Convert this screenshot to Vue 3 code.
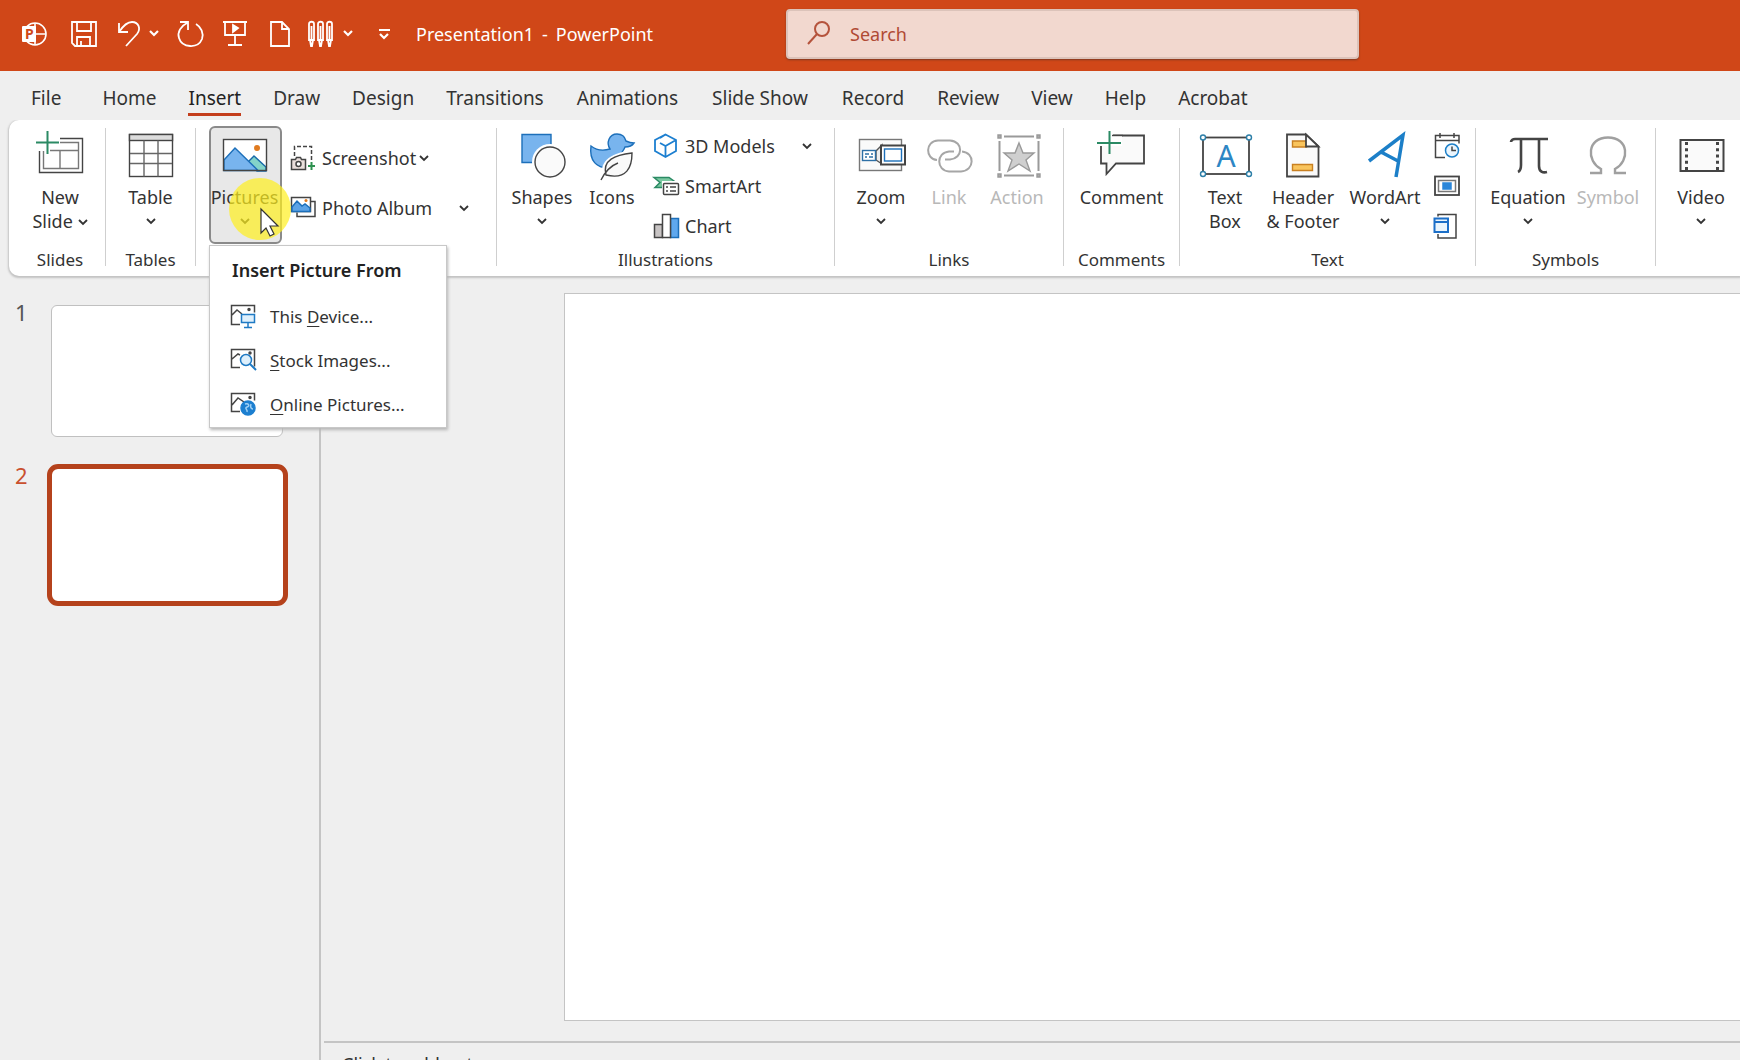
<script setup>
import { ref } from 'vue'

const tabs = [
  'File', 'Home', 'Insert', 'Draw', 'Design', 'Transitions', 'Animations',
  'Slide Show', 'Record', 'Review', 'View', 'Help', 'Acrobat'
]
const activeTab = ref('Insert')
const slides = [1, 2]
const activeSlide = ref(2)
const query = ref('')
</script>

<template>
  <div class="app">
    <header class="titlebar">
      <div class="quick">
        <svg class="logo" width="26" height="26" viewBox="0 0 26 26" fill="none" stroke="#fff" stroke-width="1.6">
          <circle cx="14" cy="13" r="11" />
          <path d="M14 2v22M14 13h11" />
          <rect x="1" y="5" width="14" height="16" rx="1" fill="#fff" stroke="none" />
          <text x="4" y="18" class="logo-letter">P</text>
        </svg>
        <button class="qbtn" aria-label="Save">
          <svg width="26" height="26" viewBox="0 0 26 26"><path d="M1 1h24v24H4l-3-3zM6 1v9h14V1M6 25v-9h13v9M10 25v-5" /></svg>
        </button>
        <button class="qbtn" aria-label="Undo">
          <svg width="26" height="26" viewBox="0 0 26 26"><path d="M4 2v9h9M4 11C8 5 12 1 17 1c7 0 9 7 5 12L11 25" /></svg>
          <svg width="14" height="14" viewBox="0 0 14 14"><path class="thick" d="M3 4l4 4 4-4" /></svg>
        </button>
        <button class="qbtn" aria-label="Redo">
          <svg width="26" height="26" viewBox="0 0 26 26"><path d="M1 1h8v8M8 2C2 5-2 11 0 17c3 10 19 11 23 1 2-6-1-12-6-15" /></svg>
        </button>
        <button class="qbtn" aria-label="From beginning">
          <svg width="26" height="26" viewBox="0 0 26 26"><path d="M0 1h24M2 1v13h20V1M12 14v10M5 24h14" /><path d="M10 4l5 3-5 4z" fill="#fff" /></svg>
        </button>
        <button class="qbtn" aria-label="New file">
          <svg width="26" height="26" viewBox="0 0 26 26"><path d="M4 1h11l7 7v17H4zM15 1v7h7" /></svg>
        </button>
        <button class="qbtn" aria-label="Pens">
          <svg width="26" height="26" viewBox="-1 0 26 26"><path d="M-3 19V3c0-3 5-3 5 0v16zM6 19V3c0-3 5-3 5 0v16zM15 19V3c0-3 5-3 5 0v16zM-2 19l1 6h1l1-6M7 19l1 6h1l1-6M16 19l1 6h1l1-6M-.500 5v14M8.500 5v14M17.500 5v14" /></svg>
          <svg width="14" height="14" viewBox="0 0 14 14"><path class="thick" d="M1 4l4 4 4-4" /></svg>
        </button>
        <button class="qbtn" aria-label="Customize toolbar">
          <svg width="14" height="14" viewBox="0 0 14 14"><path class="thick" d="M4 3h11M5 7l4 4 4-4" /></svg>
        </button>
        <h1 class="doc"><span>Presentation1</span><span>-</span><span>PowerPoint</span></h1>
      </div>
      <label class="search">
        <svg width="26" height="26" viewBox="0 0 26 26"><circle cx="16" cy="8" r="7" /><path d="M11 13L2 23" /></svg>
        <input v-model="query" type="text" placeholder="Search" aria-label="Search" />
      </label>
    </header>

    <nav class="tabs">
      <button
        v-for="tab in tabs" :key="tab" class="tab" :class="{ active: tab === activeTab }"
        @click="activeTab = tab"
      ><span>{{ tab }}</span></button>
    </nav>

    <section class="ribbon">
      <div class="group slides">
        <div class="tools">
          <button class="big">
            <svg class="ico" viewBox="0 0 48 48">
              <path d="M24 7.500H46.500V41.500H3.500V20" /><path d="M24 11.500H42.500V37.500H7.500V20M14 19.500H42M24 19.500V37" stroke="#777" />
              <path d="M11.500 0v23M0 11.500h23" stroke="#2b8a64" stroke-width="2" />
            </svg>
            <span class="cap">New<br />Slide <svg class="chev" viewBox="0 0 10 6"><path d="M1 1l4 4 4-4" /></svg></span>
          </button>
        </div>
        <div class="label">Slides</div>
      </div>

      <div class="group tables">
        <div class="tools">
          <button class="big">
            <svg class="ico" viewBox="0 0 48 48">
              <rect x="2.500" y="3.500" width="43" height="42" /><rect x="2.500" y="3.500" width="43" height="6" fill="#ddd" />
              <path d="M17 9.500v36M31 9.500v36M3 22.500h42M3 32.500h42" stroke="#666" />
            </svg>
            <span class="cap">Table</span>
            <svg class="chev" viewBox="0 0 10 6"><path d="M1 1l4 4 4-4" /></svg>
          </button>
        </div>
        <div class="label">Tables</div>
      </div>

      <div class="group images">
        <div class="tools">
          <div class="dropdown">
            <button class="big open" aria-haspopup="menu" aria-expanded="true">
              <svg class="ico" viewBox="0 0 48 48">
                <rect x="2.500" y="8.500" width="43" height="31" fill="#fff" stroke="none" />
                <path d="M27 31l6-6 12 11v4h-9z" fill="#83d3c9" stroke="#1769a8" />
                <path d="M3 29l11-12 23 22.500H3z" fill="#78b4ee" stroke="#1c6fba" />
                <circle cx="36" cy="17" r="3" fill="#e07a1f" stroke="none" />
                <rect x="2.500" y="8.500" width="43" height="31" />
              </svg>
              <span class="cap">Pictures</span>
              <svg class="chev" viewBox="0 0 10 6"><path d="M1 1l4 4 4-4" /></svg>
            </button>
            <div class="menu" role="menu">
              <h2>Insert Picture From</h2>
              <button role="menuitem">
                <svg class="mini" viewBox="0 0 26 26">
                  <path d="M10 21.500H1.500V2.500h23v7M2 12l5-5 5 4" /><circle cx="19" cy="6.500" r="1" fill="#333" />
                  <path d="M11.500 11.500h13v8h-13zM18 20v4M14 24.500h8" stroke="#1f7ac4" fill="#dff0fc" />
                </svg>
                <span>This <u>D</u>evice...</span>
              </button>
              <button role="menuitem">
                <svg class="mini" viewBox="0 0 26 26">
                  <path d="M10 20.500H1.500V2.500h23v17M2 12l6-5 2 1" /><circle cx="20" cy="6" r="1" fill="#333" />
                  <circle cx="16" cy="13" r="5.500" stroke="#1f7ac4" fill="#dff0fc" /><path d="M20 17l6 6" stroke="#1f7ac4" stroke-width="2" />
                </svg>
                <span><u>S</u>tock Images...</span>
              </button>
              <button role="menuitem">
                <svg class="mini" viewBox="0 0 26 26">
                  <path d="M10 20.500H1.500V2.500h23v7M2 14l6-7 6 4" /><circle cx="20" cy="6.500" r="1" fill="#333" />
                  <circle cx="18" cy="17" r="7" fill="#1c7fd0" stroke="#1c7fd0" /><path d="M15 13c4-1 5 2 2 3s1 3 0 5M21 13c-1 3 0 5 2 5" stroke="#9fd0f5" />
                </svg>
                <span><u>O</u>nline Pictures...</span>
              </button>
            </div>
            <div class="halo"></div>
            <svg class="cursor" width="20" height="30" viewBox="0 0 20 30">
              <path d="M1 1v24l5-5 4 8 4-2-4-8h8z" fill="#fff" stroke="#333" stroke-width="1.200" />
            </svg>
          </div>
          <div class="stack two">
            <button class="row">
              <svg class="mini" viewBox="0 0 26 26">
                <path d="M4.500 11V1.500h17V16" stroke-dasharray="4 2" />
                <path d="M1.500 14.500h4l1-2h4l1 2h4v10h-14z" fill="#eadfdc" /><circle cx="8.500" cy="19" r="2.500" fill="#fff" />
                <path d="M21.500 17v8M18 21h7" stroke="#2e9150" stroke-width="2" />
              </svg>
              <span>Screenshot</span><svg class="chev near" viewBox="0 0 10 6"><path d="M1 1l4 4 4-4" /></svg>
            </button>
            <button class="row">
              <svg class="mini" viewBox="0 0 26 26">
                <path d="M21 6.500h4v15H7v-4" />
                <rect x="1.500" y="2.500" width="19" height="14" fill="#fff" />
                <path d="M2 12l5-6 5 5 3-2 5 4v3.500H2z" fill="#5ca3e6" stroke="#1c6fba" /><circle cx="16" cy="5.500" r="1.500" fill="#e07a1f" stroke="none" />
              </svg>
              <span>Photo Album</span><svg class="chev far" viewBox="0 0 10 6"><path d="M1 1l4 4 4-4" /></svg>
            </button>
          </div>
        </div>
      </div>

      <div class="group illustrations">
        <div class="tools">
          <button class="big">
            <svg class="ico" viewBox="0 0 48 48">
              <path d="M4 3.500h29v28H4z" fill="#78b4ee" stroke="#1c6fba" />
              <circle cx="32" cy="31" r="18" fill="#fff" stroke="none" /><circle cx="32" cy="31" r="15" fill="#fafafa" />
            </svg>
            <span class="cap">Shapes</span>
            <svg class="chev" viewBox="0 0 10 6"><path d="M1 1l4 4 4-4" /></svg>
          </button>
          <button class="big">
            <svg class="ico" viewBox="0 0 48 48">
              <path d="M3 15c5 4 12 5 19 3-4-6-1-15 7-15 5 0 8 3 9 7 2 1 5 2 8 2-2 3-5 4-9 4-1 3-3 5-4 7l-13 14C9 37 1 30 3 15z" fill="#78b4ee" stroke="#1c6fba" />
              <path d="M14 46c-2-13 4-24 32-27 0 18-6 30-26 28z" fill="#fff" stroke="none" />
              <path d="M18 44c-4-15 9-20 26-22 0 14-5 27-26 22zM13 49c4-8 9-14 17-17" fill="#fafafa" />
            </svg>
            <span class="cap">Icons</span>
          </button>
          <div class="stack">
            <button class="row">
              <svg class="mini" viewBox="0 0 26 26"><path d="M12.500 1.500L23 7v11l-10.500 6L2 18V7zM12.500 24V13L23 7M12.500 13L7 10M12.500 1.500L7 5" stroke="#1c7fd0" stroke-width="1.800" /></svg>
              <span>3D Models</span><svg class="chev far" viewBox="0 0 10 6"><path d="M1 1l4 4 4-4" /></svg>
            </button>
            <button class="row">
              <svg class="mini" viewBox="0 0 26 26">
                <path d="M1 4.500h15l7 5H11v5H2l5-5z" fill="#7cc9a2" stroke="#2b8a64" />
                <path d="M9 8h17v15H9z" fill="#fff" stroke="none" />
                <rect x="10.500" y="10.500" width="15" height="11" rx="1" fill="#fff" /><path d="M13 14h2M17 14h6M13 18h2M17 18h6" />
              </svg>
              <span>SmartArt</span>
            </button>
            <button class="row">
              <svg class="mini" viewBox="0 0 26 26">
                <path d="M1.500 11.500h8v13h-8z" fill="#c8c4c4" /><path d="M17.500 5.500h8v19h-8z" fill="#5fa8ee" stroke="#1c6fba" /><path d="M9.500 1.500h8v23h-8z" fill="#fff" />
              </svg>
              <span>Chart</span>
            </button>
          </div>
        </div>
        <div class="label">Illustrations</div>
      </div>

      <div class="group links">
        <div class="tools">
          <button class="big">
            <svg class="ico" viewBox="0 0 48 48">
              <rect x="2.500" y="8.500" width="42" height="31" fill="#fafafa" stroke="#777" />
              <path d="M19 20l6-6v19l-6-4z" fill="#eee" stroke="#555" />
              <rect x="5.500" y="19.500" width="13" height="10" fill="#fff" stroke="#2d6fa5" /><path d="M8 23h4M14 23h2M8 26h2M12 26h4" stroke="#2d6fa5" />
              <rect x="24" y="14.500" width="24" height="19" fill="#fff" stroke-width="2" /><rect x="27.500" y="18" width="17" height="12" stroke="#1c6fba" />
            </svg>
            <span class="cap">Zoom</span>
            <svg class="chev" viewBox="0 0 10 6"><path d="M1 1l4 4 4-4" /></svg>
          </button>
          <button class="big" disabled>
            <svg class="ico" viewBox="0 0 48 48">
              <g stroke="#a6a6a6" stroke-width="2"><path d="M12 29C0 28 0 10 13 9.500h12c14 1 13 18 0 19h-5" /><path d="M37 20.500c13 1 13 19-1 20H24c-13-1-13-19 0-20h5" /></g>
            </svg>
            <span class="cap">Link</span>
          </button>
          <button class="big" disabled>
            <svg class="ico" viewBox="0 0 48 48">
              <g stroke="#9a9a9a"><path d="M11 5.500h30M11 44.500h30M6.500 10v30M45.500 10v30" stroke-width="2" />
              <path d="M26 12l4 10h11l-8 7 4 11-11-7-11 7 4-11-8-7h11z" fill="#cfcfcf" />
              <path d="M5 4h3v3H5zM44 4h3v3h-3zM5 43h3v3H5zM44 43h3v3h-3z" fill="#aaa" /></g>
            </svg>
            <span class="cap">Action</span>
          </button>
        </div>
        <div class="label">Links</div>
      </div>

      <div class="group comments">
        <div class="tools">
          <button class="big">
            <svg class="ico" viewBox="0 0 48 48">
              <path d="M15 4.500H46v28H18L8.500 43V32.500H3V15" fill="#fafafa" stroke-width="1.800" />
              <path d="M0 0h15v4H24v11H0z" fill="#fff" stroke="none" /><path d="M14 4.500h11" />
              <path d="M11.500 0v23M-1 12h24" stroke="#2b8a64" stroke-width="2" />
            </svg>
            <span class="cap">Comment</span>
          </button>
        </div>
        <div class="label">Comments</div>
      </div>

      <div class="group text">
        <div class="tools">
          <button class="big">
            <svg class="ico" viewBox="0 0 48 48">
              <rect x="2" y="6.500" width="46" height="36.500" stroke-width="1.800" />
              <g fill="#fff" stroke="#2d7fa8"><circle cx="2" cy="6.500" r="2.500" /><circle cx="48" cy="6.500" r="2.500" /><circle cx="2" cy="43" r="2.500" /><circle cx="48" cy="43" r="2.500" /></g>
              <text x="25" y="36" text-anchor="middle" class="letter">A</text>
            </svg>
            <span class="cap">Text<br />Box</span>
          </button>
          <button class="big">
            <svg class="ico" viewBox="0 0 48 48">
              <path d="M8 3.500h19l12.500 12v30H8z" fill="#fafafa" stroke-width="1.800" />
              <path d="M13.500 10h14v6h-14zM13.500 33.500h20v6h-20z" fill="#f9c45c" stroke="#c98021" />
              <path d="M27 3.500v12h12.500z" fill="#fff" stroke-width="1.800" />
            </svg>
            <span class="cap">Header<br />&amp; Footer</span>
          </button>
          <button class="big wide">
            <svg class="ico" viewBox="0 0 48 48"><path d="M8 30L42 4 35 46M20 21l17 9" stroke="#1c7fc8" stroke-width="3.500" /></svg>
            <span class="cap">WordArt</span>
            <svg class="chev" viewBox="0 0 10 6"><path d="M1 1l4 4 4-4" /></svg>
          </button>
          <div class="stack">
            <button class="row" aria-label="Date and time">
              <svg class="mini" viewBox="0 0 26 26">
                <path d="M11 24.500H1.500V2.500h23.500v8M2 7.500h23M6 0v5M20 0v5" />
                <circle cx="18" cy="17.500" r="6.500" stroke="#1c7fc8" fill="#eaf5fd" /><path d="M18 13.500v4h4" />
              </svg>
            </button>
            <button class="row" aria-label="Slide number">
              <svg class="mini" viewBox="0 0 26 26">
                <rect x="1" y="3.500" width="24" height="18.500" stroke-width="1.800" /><rect x="4.500" y="7.500" width="17" height="11" stroke="#777" /><path d="M9 10h8v6H9z" fill="#2b86d9" stroke="#2b86d9" />
              </svg>
            </button>
            <button class="row" aria-label="Object">
              <svg class="mini" viewBox="0 0 26 26">
                <path d="M4 3.500V1.500h18v23.500H4v-4" /><path d="M.500 5.500h13.500v13.500H.500zM1 9h13" stroke="#1c6fc8" stroke-width="2" fill="#eaf5fd" />
              </svg>
            </button>
          </div>
        </div>
        <div class="label">Text</div>
      </div>

      <div class="group symbols">
        <div class="tools">
          <button class="big">
            <svg class="ico" viewBox="0 0 48 48"><path d="M7 11c0-2 2-3 4-3h33M17 8v26c0 4-1 6-3 7M35 8v27c0 6 4 7 8 6" stroke-width="2.600" /></svg>
            <span class="cap">Equation</span>
            <svg class="chev" viewBox="0 0 10 6"><path d="M1 1l4 4 4-4" /></svg>
          </button>
          <button class="big" disabled>
            <svg class="ico" viewBox="0 0 48 48"><path d="M6 42h11v-4C2 30 3 6.500 24 6.500S46 30 31 38v4h11" stroke="#a0a0a0" stroke-width="2.400" /></svg>
            <span class="cap">Symbol</span>
          </button>
        </div>
        <div class="label">Symbols</div>
      </div>

      <div class="group media">
        <div class="tools">
          <button class="big">
            <svg class="ico" viewBox="0 0 48 48">
              <rect x="3.500" y="9" width="43" height="31" fill="#fafafa" stroke-width="2" />
              <path d="M9.500 11v28M40.500 11v28" stroke-width="3" stroke-dasharray="3 3.250" />
            </svg>
            <span class="cap">Video</span>
            <svg class="chev" viewBox="0 0 10 6"><path d="M1 1l4 4 4-4" /></svg>
          </button>
        </div>
      </div>
    </section>

    <main class="work">
      <aside class="thumbs">
        <button
          v-for="n in slides" :key="n" class="thumb" :class="{ active: n === activeSlide }"
          :aria-label="'Slide ' + n" @click="activeSlide = n"
        >
          <span class="num">{{ n }}</span><span class="page"></span>
        </button>
      </aside>
      <section class="editor">
        <div class="canvas"><div class="slide"></div></div>
        <div class="notes">Click to add notes</div>
      </section>
    </main>
  </div>
</template>

<style>
body {
  margin: 0;
  background: #efefef;
}
</style>

<style scoped>
.app {
  display: flex;
  flex-direction: column;
  height: 100vh;
  overflow: hidden;
  background: #efefef;
  color: #333;
  font-family: "Noto Sans", "Open Sans", sans-serif;
  font-size: 18px;
}
button {
  margin: 0;
  padding: 0;
  border: 0;
  background: none;
  color: inherit;
  font: inherit;
}
svg {
  display: block;
  flex: none;
  overflow: visible;
  fill: none;
}

/* Title bar */
.titlebar {
  display: flex;
  align-items: flex-start;
  flex: none;
  height: 71px;
  background: #d04718;
  color: #fff;
}
.quick {
  display: flex;
  align-items: center;
  gap: 18px;
  flex: 0 0 765px;
  height: 68px;
  padding-left: 21px;
}
.logo {
  margin-right: 6px;
}
.logo-letter {
  fill: #d04718;
  stroke: none;
  font-size: 14px;
  font-weight: 700;
}
.qbtn {
  display: flex;
  align-items: center;
  gap: 6px;
  stroke: #fff;
  stroke-width: 1.8;
}
.thick {
  stroke-width: 2.2;
}
.doc {
  display: flex;
  gap: 8px;
  margin: 0 0 0 9px;
  font-size: 18px;
  font-weight: 400;
  line-height: 24px;
}
.search {
  display: flex;
  align-items: center;
  gap: 18px;
  flex: 0 1 573px;
  box-sizing: border-box;
  height: 50px;
  margin-top: 9px;
  padding: 0 18px;
  border: 2px solid #dcc3ba;
  border-radius: 4px;
  background: #f2d8cf;
  box-shadow: 0 1px 2px #7d3a22;
  stroke: #b5533c;
  stroke-width: 2;
}
.search input {
  flex: 1;
  min-width: 0;
  padding: 0;
  border: 0;
  outline: 0;
  background: none;
  color: #b04a34;
  font: inherit;
}
.search input::placeholder {
  color: #b04a34;
  opacity: 1;
}

/* Tabs */
.tabs {
  display: flex;
  flex: none;
  height: 49px;
  padding-left: 15px;
  font-size: 19px;
}
.tab {
  padding: 0 16px;
  white-space: nowrap;
}
.tab:first-child {
  margin-right: 9px;
}
.tab:nth-child(n + 7):nth-child(-n + 9) {
  padding: 0 17px;
}
.tab span {
  display: block;
  padding: 7px 0 0;
  line-height: 30px;
  border-bottom: 3px solid transparent;
}
.tab.active span {
  border-color: #c43e1c;
}
.tab.active {
  color: #222;
}

/* Ribbon */
.ribbon {
  display: flex;
  flex: none;
  margin-left: 9px;
  padding: 8px 0 10px;
  border-radius: 10px 0 0 10px;
  background: #fff;
  box-shadow: 0 1px 2px 1px #c2c2c2;
  clip-path: inset(0 0 -200px -4px);
  position: relative;
  z-index: 1;
}
.group {
  display: flex;
  flex-direction: column;
  flex: none;
  box-sizing: border-box;
  height: 138px;
  border-right: 1px solid #cfcfcf;
}
.slides { width: 97px; padding-left: 6px; }
.tables { width: 90px; }
.images { width: 301px; }
.illustrations { width: 338px; }
.links { width: 229px; }
.comments { width: 116px; }
.text { width: 296px; }
.symbols { width: 180px; }
.media { width: 90px; border: 0; }
.tools {
  display: flex;
  flex: 1;
  margin-top: -2px;
}
.slides .tools, .tables .tools, .comments .tools, .media .tools { justify-content: center; }
.images .tools { padding-left: 13px; }
.illustrations .tools { padding-left: 10px; }
.links .tools { padding-left: 12px; }
.text .tools { padding-left: 6px; }
.symbols .tools { padding-left: 12px; }
.label {
  text-align: center;
  font-size: 17px;
  line-height: 12px;
}
.big {
  display: flex;
  flex-direction: column;
  align-items: center;
  box-sizing: border-box;
  width: 70px;
  height: 118px;
  padding-top: 4px;
  border: 1px solid transparent;
  white-space: nowrap;
}
.links .big { width: 68px; }
.text .big { width: 78px; }
.text .big.wide { width: 86px; }
.symbols .big { width: 80px; }
.big.open {
  width: 73px;
  border: 2px solid #8a8a8a;
  border-radius: 6px;
  padding: 3px 2px 0 0;
  background: #e8e8e8;
}
.big:disabled {
  color: #b8b8b8;
}
.ico {
  width: 48px;
  height: 48px;
  margin-bottom: 6px;
  stroke: #444;
  stroke-width: 1.4;
}
.letter {
  fill: #2d86c4;
  stroke: none;
  font-size: 30px;
}
.cap {
  line-height: 24px;
}
.chev {
  width: 10px;
  height: 6px;
  stroke: #333;
  stroke-width: 1.8;
}
.cap .chev {
  display: inline-block;
  vertical-align: 3px;
}
.big > .chev {
  margin-top: 9px;
}
.stack {
  display: flex;
  flex-direction: column;
  gap: 14px;
  padding: 7px 0 0 6px;
}
.stack.two {
  gap: 24px;
  padding: 19px 0 0 8px;
}
.row {
  display: flex;
  align-items: center;
  gap: 6px;
  height: 26px;
  line-height: 26px;
  white-space: nowrap;
}
.mini {
  width: 26px;
  height: 26px;
  stroke: #444;
  stroke-width: 1.5;
}
.near {
  margin-left: -3px;
}
.far {
  margin-left: 21px;
}

/* Pictures menu */
.dropdown {
  position: relative;
}
.menu {
  position: absolute;
  top: 119px;
  left: 0;
  z-index: 2;
  box-sizing: border-box;
  width: 238px;
  padding: 8px 0 1px;
  border: 1px solid #c8c8c8;
  background: #fff;
  box-shadow: 1px 2px 3px #b5b5b5;
  font-size: 17px;
}
.menu h2 {
  margin: 0 0 8px 22px;
  font-size: 18px;
  font-weight: 600;
  line-height: 32px;
  white-space: nowrap;
  color: #222;
}
.menu button {
  display: flex;
  align-items: center;
  gap: 14px;
  width: 100%;
  height: 44px;
  padding-left: 20px;
  white-space: nowrap;
}
.menu u {
  text-underline-offset: 3px;
}
.halo {
  position: absolute;
  top: 52px;
  left: 20px;
  z-index: 3;
  width: 62px;
  height: 62px;
  border-radius: 50%;
  background: #fff01e;
  opacity: 0.7;
  pointer-events: none;
}
.cursor {
  position: absolute;
  top: 82px;
  left: 51px;
  z-index: 4;
  pointer-events: none;
}

/* Work area */
.work {
  display: flex;
  flex: 1;
  min-height: 0;
}
.thumbs {
  box-sizing: border-box;
  flex: 0 0 321px;
  padding-top: 25px;
  border-right: 2px solid #c4c4c4;
}
.thumb {
  display: flex;
  align-items: flex-start;
  width: 100%;
  height: 142px;
  margin-bottom: 21px;
  padding-left: 15px;
  text-align: left;
}
.num {
  width: 32px;
  line-height: 22px;
  font-size: 22px;
  color: #555;
}
.page {
  box-sizing: border-box;
  width: 232px;
  height: 132px;
  margin: 4px;
  border: 1px solid #c0c0c0;
  border-radius: 6px;
  background: #fff;
}
.thumb.active .num {
  color: #c9502e;
}
.thumb.active .page {
  width: 241px;
  height: 142px;
  margin: 0;
  border: 5px solid #b5421c;
  border-radius: 11px;
}
.editor {
  display: flex;
  flex-direction: column;
  flex: 1;
  min-width: 0;
}
.canvas {
  display: flex;
  flex: 1;
  padding: 17px 0 20px 243px;
}
.slide {
  flex: 1;
  border: 1px solid #c4c4c4;
  border-right: 0;
  background: #fff;
}
.notes {
  flex: none;
  height: 19px;
  box-sizing: border-box;
  margin-left: 3px;
  padding: 9px 0 0 18px;
  border-top: 2px solid #c4c4c4;
  line-height: 24px;
}
</style>
